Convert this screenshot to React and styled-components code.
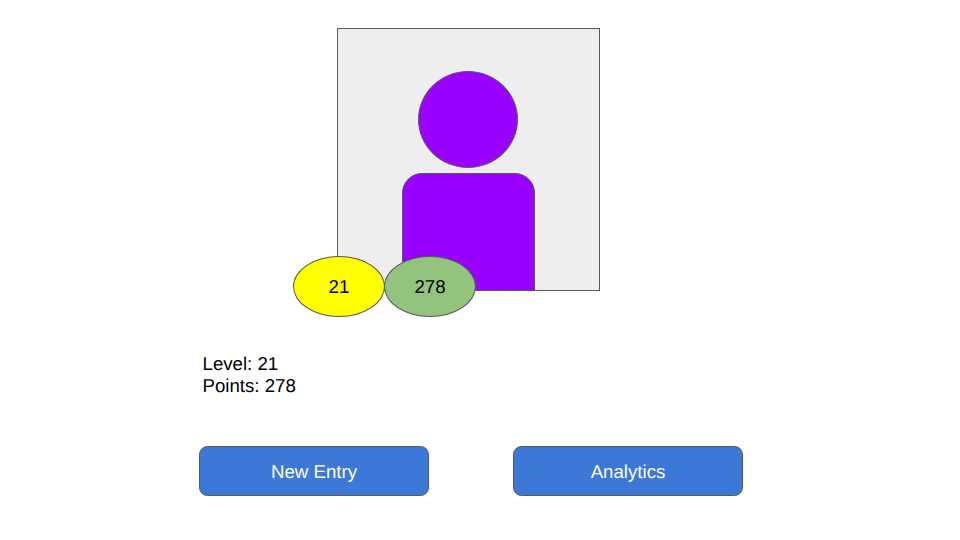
import React from "react";
import styled, { createGlobalStyle } from "styled-components";

const outline = "#595959";

const GlobalStyle = createGlobalStyle`
  * { box-sizing: border-box; }
  body {
    margin: 0;
    background: #ffffff;
    color: #000000;
    font-family: "Liberation Sans", Arial, sans-serif;
    font-size: 18.67px;
    text-rendering: geometricPrecision;
  }
`;

const Page = styled.main`
  display: flex;
  flex-direction: column;
  width: 960px;
  height: 540px;
  padding: 28px 0 0 199px;
  overflow: hidden;
`;

const AvatarFrame = styled.section`
  position: relative;
  display: flex;
  flex-direction: column;
  align-items: center;
  width: 263px;
  height: 263px;
  margin-left: 138px;
  padding-top: 42px;
  border: 1px solid ${outline};
  background: #eeeeee;
`;

const Head = styled.div`
  width: 100px;
  height: 97px;
  flex: none;
  margin-right: 1px;
  border: 1px solid ${outline};
  border-radius: 50%;
  background: #9900ff;
`;

const Torso = styled.div`
  width: 133px;
  height: 118px;
  flex: none;
  margin-top: 5px;
  border: 1px solid ${outline};
  border-radius: 20px 20px 0 0;
  background: #9900ff;
`;

const Badges = styled.div`
  position: absolute;
  left: -45px;
  top: 227px;
  display: flex;
`;

const Badge = styled.div`
  display: flex;
  align-items: center;
  justify-content: center;
  width: 92px;
  height: 61px;
  padding-top: 1px;
  border: 1px solid ${outline};
  border-radius: 50%;
  background: ${({ $color }) => $color};

  & + & { margin-left: -1px; }
`;

const Stats = styled.div`
  margin: 62px 0 0 3.5px;
  line-height: 22px;
`;

const Stat = styled.p`
  margin: 0;
`;

const Actions = styled.nav`
  display: flex;
  gap: 84px;
  margin-top: 49px;
`;

const ActionButton = styled.button`
  width: 230px;
  height: 50px;
  padding: 1px 0 0;
  border: 1px solid ${outline};
  border-radius: 8.5px;
  background: #3c78d8;
  color: #ffffff;
  font: inherit;
  text-rendering: inherit;
`;

export default function App() {
  const level = 21;
  const points = 278;
  return (
    <>
      <GlobalStyle />
      <Page>
        <AvatarFrame>
          <Head />
          <Torso />
          <Badges>
            <Badge $color="#ffff00">{level}</Badge>
            <Badge $color="#93c47d">{points}</Badge>
          </Badges>
        </AvatarFrame>
        <Stats>
          <Stat>Level: {level}</Stat>
          <Stat>Points: {points}</Stat>
        </Stats>
        <Actions>
          <ActionButton>New Entry</ActionButton>
          <ActionButton>Analytics</ActionButton>
        </Actions>
      </Page>
    </>
  );
}
